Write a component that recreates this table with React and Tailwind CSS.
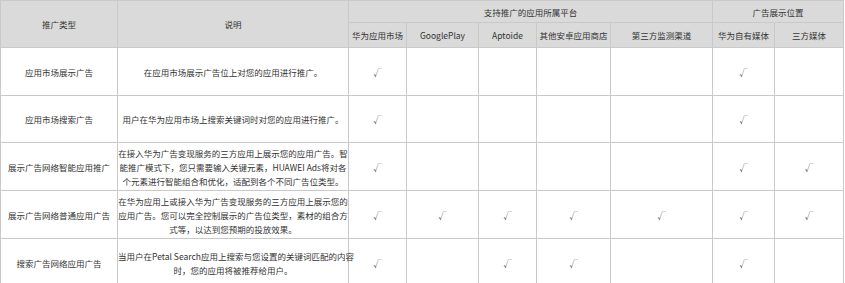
const font = { fontFamily: '"Noto Sans CJK SC", "Noto Sans", sans-serif' };

const rows = [
  {
    type: "应用市场展示广告",
    desc: ["在应用市场展示广告位上对您的应用进行推广。"],
    checks: [1, 0, 0, 0, 0, 1, 0],
    h: "h-[48px]",
  },
  {
    type: "应用市场搜索广告",
    desc: ["用户在华为应用市场上搜索关键词时对您的应用进行推广。"],
    checks: [1, 0, 0, 0, 0, 1, 0],
    h: "h-[47px]",
  },
  {
    type: "展示广告网络智能应用推广",
    desc: [
      "在接入华为广告变现服务的三方应用上展示您的应用广告。智",
      "能推广模式下，您只需要输入关键元素，HUAWEI Ads将对各",
      "个元素进行智能组合和优化，适配到各个不同广告位类型。",
    ],
    checks: [1, 0, 0, 0, 0, 1, 1],
    h: "h-[48px]",
  },
  {
    type: "展示广告网络普通应用广告",
    desc: [
      "在华为应用上或接入华为广告变现服务的三方应用上展示您的",
      "应用广告。您可以完全控制展示的广告位类型，素材的组合方",
      "式等，以达到您预期的投放效果。",
    ],
    checks: [1, 1, 1, 1, 1, 1, 1],
    h: "h-[48px]",
  },
  {
    type: "搜索广告网络应用广告",
    desc: [
      "当用户在Petal Search应用上搜索与您设置的关键词匹配的内容",
      "时，您的应用将被推荐给用户。",
    ],
    checks: [1, 0, 1, 1, 0, 1, 0],
    h: "h-[48px]",
  },
];

const cell = "border border-[#c9c9c9] text-center align-middle p-0";

export default function App() {
  return (
    <div className="w-[845px] h-[283px] overflow-hidden bg-white text-[#333] text-[8.5px] leading-[14px]" style={font}>
      <table className="table-fixed border-collapse w-[843px]">
        <colgroup>
          <col className="w-[117px]" />
          <col className="w-[231px]" />
          <col className="w-[58px]" />
          <col className="w-[72px]" />
          <col className="w-[58px]" />
          <col className="w-[74px]" />
          <col className="w-[102px]" />
          <col className="w-[62px]" />
          <col className="w-[69px]" />
        </colgroup>
        <thead className="bg-[#dadada] font-normal">
          <tr className="h-[22px]">
            <th rowSpan={2} className={`${cell} font-normal`}>推广类型</th>
            <th rowSpan={2} className={`${cell} font-normal`}>说明</th>
            <th colSpan={5} className={`${cell} font-normal`}>支持推广的应用所属平台</th>
            <th colSpan={2} className={`${cell} font-normal`}>广告展示位置</th>
          </tr>
          <tr className="h-[25px]">
            {["华为应用市场", "GooglePlay", "Aptoide", "其他安卓应用商店", "第三方监测渠道", "华为自有媒体", "三方媒体"].map((t) => (
              <th key={t} className={`${cell} font-normal whitespace-nowrap`}>{t}</th>
            ))}
          </tr>
        </thead>
        <tbody>
          {rows.map((r) => (
            <tr key={r.type} className={r.h}>
              <td className={cell}>{r.type}</td>
              <td className={cell}>
                {r.desc.map((l) => (
                  <span key={l} className="block whitespace-nowrap">{l}</span>
                ))}
              </td>
              {r.checks.map((c, i) => (
                <td key={i} className={`${cell} text-[#555]`}>{c ? "√" : ""}</td>
              ))}
            </tr>
          ))}
        </tbody>
      </table>
    </div>
  );
}
